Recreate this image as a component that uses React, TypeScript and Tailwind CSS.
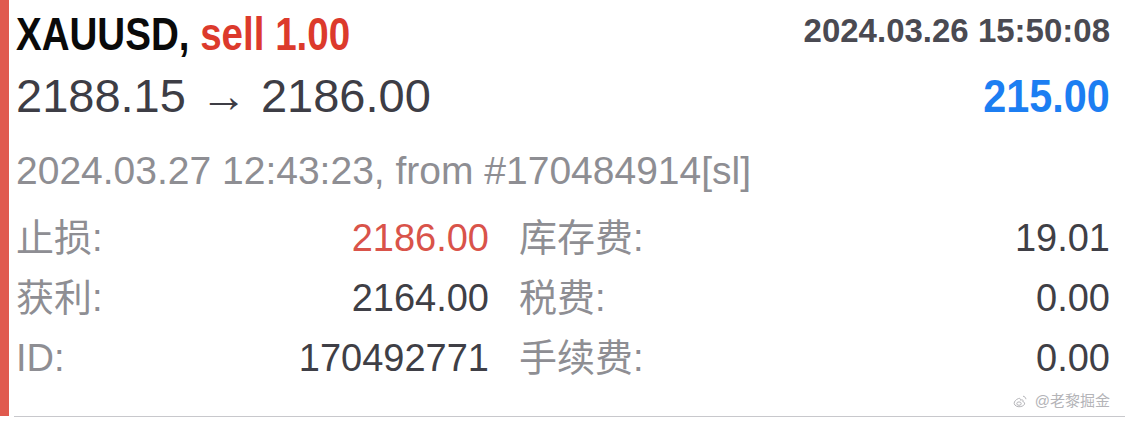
import React from "react";

const sans = "font-['Liberation_Sans','Noto_Sans_CJK_SC',sans-serif]";

function Row({
  l1,
  v1,
  l2,
  v2,
  v1Class = "text-[#3f3f46]",
}: {
  l1: string;
  v1: string;
  l2: string;
  v2: string;
  v1Class?: string;
}) {
  return (
    <div className="grid grid-cols-[473px_1fr] text-[38px] leading-[60px]">
      <div className="flex justify-between">
        <span className="text-[#8e8e93]">{l1}</span>
        <span className={v1Class}>{v1}</span>
      </div>
      <div className="flex justify-between pl-[30px]">
        <span className="text-[#8e8e93]">{l2}</span>
        <span className="text-[#3f3f46]">{v2}</span>
      </div>
    </div>
  );
}

function WeiboIcon() {
  return (
    <svg width="14" height="13" viewBox="0 0 14 13" fill="none" stroke="#b4b4b8" strokeWidth="1">
      <path d="M5.5 3.5C3 4.5 1 6.5 1.2 8.5c0.3 2.2 3.2 3.6 6 3.2 2.9-0.4 4.7-2 4.4-3.6-0.2-1-1.2-1.2-1.8-1.4 0.4-0.8 0.5-1.6-0.4-1.8-0.8-0.2-2 0.3-2 0.3 0.2-0.8 0-1.6-0.8-1.8C6.2 3.3 5.8 3.4 5.5 3.5z" />
      <ellipse cx="6" cy="8.6" rx="2.2" ry="1.7" />
      <path d="M10 1.2c1.6 0.2 2.8 1.4 2.9 3" />
    </svg>
  );
}

export default function App() {
  return (
    <div className={`w-[1125px] h-[432px] bg-white ${sans} overflow-hidden`}>
      <div className="flex h-[417px]">
        <div className="w-[9px] h-[416px] bg-[#e05a4e]" />
        <div className="flex-1 ml-[5px] border-b border-[#c8c8cc]">
          <div className="pl-[2px] pr-[15px]">
            {/* Row 1 */}
            <div className="flex justify-between items-start pt-[6px]">
              <div className="font-bold text-[47px] leading-[56px] text-[#0a0a0a] scale-x-[0.82] origin-left whitespace-nowrap">
                XAUUSD, <span className="text-[#dc3a2c]">sell 1.00</span>
              </div>
              <div className="mt-[5px] font-bold text-[33px] leading-[40px] text-[#4a4a52] whitespace-nowrap">
                2024.03.26 15:50:08
              </div>
            </div>
            {/* Row 2 */}
            <div className="flex justify-between items-baseline mt-[6px]">
              <div className="text-[47px] leading-[56px] text-[#3d3d45] whitespace-nowrap">
                2188.15<span className="mx-[14px]">→</span>2186.00
              </div>
              <div className="font-bold text-[47px] leading-[56px] text-[#1c7ef2] scale-x-[0.88] origin-right">
                215.00
              </div>
            </div>
            {/* Row 3 */}
            <div className="mt-[22px] text-[39px] leading-[50px] text-[#8e8e93] whitespace-nowrap">
              2024.03.27 12:43:23, from #170484914[sl]
            </div>
            {/* Grid */}
            <div className="mt-[12px]">
              <Row l1="止损:" v1="2186.00" v1Class="text-[#d9534a]" l2="库存费:" v2="19.01" />
              <Row l1="获利:" v1="2164.00" l2="税费:" v2="0.00" />
              <Row l1="ID:" v1="170492771" l2="手续费:" v2="0.00" />
            </div>
            {/* watermark */}
            <div className="flex justify-end items-center gap-[8px] h-[26px] text-[15px] leading-[26px] text-[#b4b4b8]">
              <WeiboIcon />
              <span>@老黎掘金</span>
            </div>
          </div>
        </div>
      </div>
    </div>
  );
}
